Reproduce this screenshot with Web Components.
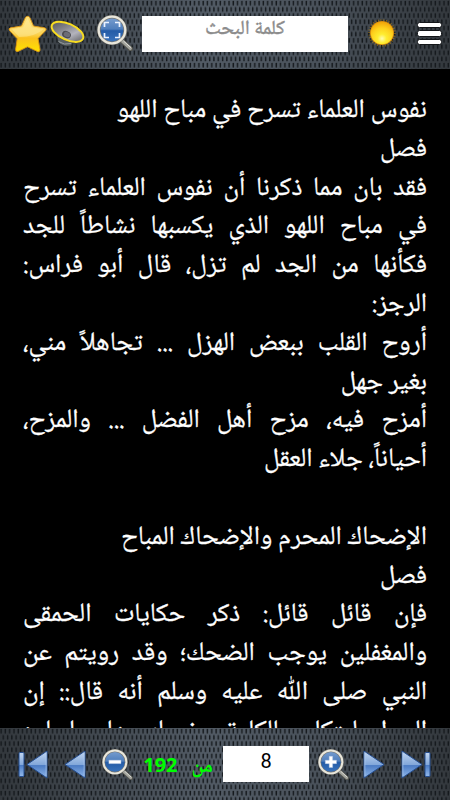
<!DOCTYPE html>
<html lang="ar" dir="rtl">
<head>
<meta charset="utf-8">
<title>Reader</title>
<style>
html,body{margin:0;height:100%;background:#000;overflow:hidden}
</style>
</head>
<body>
<reader-app></reader-app>
<script>
const define = (name, html) => customElements.define(name, class extends HTMLElement {
  constructor() {
    super();
    const t = document.createElement('template');
    t.innerHTML = html;
    this.attachShadow({mode: 'open'}).append(t.content.cloneNode(true));
  }
});

define('mesh-bar', `<style>
:host{display:block;position:relative;box-sizing:border-box;direction:ltr;background:#3b4248;overflow:hidden}
.tex{position:absolute;inset:0;width:100%;height:100%}
.row{position:relative;display:flex;align-items:flex-start;height:100%}
</style>
<svg class="tex"><defs>
<pattern id="m" width="4.3" height="12.4" patternUnits="userSpaceOnUse">
<rect x=".4" y=".8" width="1.4" height="4.8" rx=".7" fill="#14181c"/>
<rect x="2.55" y="7" width="1.4" height="4.8" rx=".7" fill="#14181c"/>
</pattern>
<linearGradient id="g"><stop offset="0" stop-color="#33383d"/><stop offset=".45" stop-color="#525b65"/><stop offset=".7" stop-color="#4a525b"/><stop offset="1" stop-color="#33383d"/></linearGradient></defs>
<rect width="100%" height="100%" fill="url(#g)"/><rect width="100%" height="100%" fill="url(#m)"/></svg>
<div class="row"><slot></slot></div>`);

define('star-icon', `<style>:host{display:block;width:40px;height:38px}svg{display:block}</style>
<svg width="40" height="38" viewBox="0 0 40 38"><defs><linearGradient id="a" x2="0" y2="1"><stop offset="0" stop-color="#ffe27a"/><stop offset=".5" stop-color="#fbd355"/><stop offset=".62" stop-color="#fbc11d"/><stop offset="1" stop-color="#ffe200"/></linearGradient></defs>
<path d="M19.5 1.3Q21 .8 22 3L25.5 11 36.5 12.8Q39.3 13.5 37.5 15.7L30 23.5 32 34.5Q32 37.5 29.3 36.4L19.5 31.8 10 36.4Q7.3 37.2 7.6 34.3L9.2 23.7 1.5 15.5Q0 13.5 2.6 12.8L13.5 11 17.2 3Q18 1.2 19.5 1.3Z" fill="url(#a)" stroke="#dc9512" stroke-width=".9"/>
<path d="M19.5 3 23.8 12.2 35.5 14.2Q28 21.5 11 22L4 14.2 15 12.2Z" fill="#fff3b5" opacity=".4"/></svg>`);

define('speaker-icon', `<style>:host{display:block;width:37px;height:29px}svg{display:block}</style>
<svg width="37" height="29" viewBox="0 0 37 29"><defs><linearGradient id="a" x2="1" y2=".4"><stop offset="0" stop-color="#4c4c50"/><stop offset=".45" stop-color="#85858b"/><stop offset=".75" stop-color="#b4b4bd"/><stop offset="1" stop-color="#7c7c82"/></linearGradient></defs>
<path d="M7 14 9 22Q13 27.500 22 26L26 20Z" fill="#596064" stroke="#25292b" stroke-width=".8"/><path d="M9.500 21.500Q15 25.500 22 23.500" fill="none" stroke="#949a9c"/>
<g transform="rotate(24 18.500 11.800)"><ellipse cx="18.500" cy="11.800" rx="17.900" ry="9" fill="#3a3216"/>
<ellipse cx="18.500" cy="11.800" rx="17" ry="8.100" fill="url(#a)" stroke="#f7dc22" stroke-width="2"/></g>
<ellipse cx="17.500" cy="14.600" rx="4.600" ry="3.500" transform="rotate(24 17.500 14.600)" fill="#4c4c52"/><ellipse cx="18.200" cy="14.500" rx="3.300" ry="2.500" transform="rotate(24 18 14)" fill="#6d6d76"/></svg>`);

define('lens-icon', `<style>:host{display:block;width:31px;height:31px}svg{display:block;width:100%;height:100%}
g.k{display:none}:host([kind=plus]) .plus,:host([kind=minus]) .minus,:host([kind=frame]) .frame{display:block}</style>
<svg viewBox="0 0 36 36"><defs><linearGradient id="a" x2="0" y2="1"><stop offset="0" stop-color="#7a9fd0"/><stop offset=".46" stop-color="#507fbd"/><stop offset=".53" stop-color="#245ca7"/><stop offset="1" stop-color="#3c76bf"/></linearGradient></defs>
<path d="M25.5 26.5 33.5 33.8" stroke="#555650" stroke-width="5" stroke-linecap="round"/>
<path d="M25.5 26.3 33.3 33.4" stroke="#a3a49d" stroke-width="3.3" stroke-linecap="round"/><path d="M26.5 26 34 32.7" stroke="#e0e0da" stroke-width="1"/>
<circle cx="15" cy="15" r="13.2" fill="url(#a)" stroke="#77756e" stroke-width="3.5"/>
<circle cx="15" cy="15" r="13.3" fill="none" stroke="#e9e7dc" stroke-width="2.3"/>
<g class="k frame" fill="none" stroke="#eaf2ff" stroke-width="1.7"><path d="M7.5 12V7.5H12M18 7.5h4.5V12M22.5 18v4.5H18M12 22.5H7.5V18"/></g>
<g class="k minus"><path d="M8 13h14v4H8z" fill="#fff" stroke="#b1c5e3" stroke-width=".5"/></g>
<g class="k plus"><path d="M13 8.500h4V13h4.500v4H17v4.500h-4V17H8.500v-4H13z" fill="#fff" stroke="#b1c5e3" stroke-width=".5"/></g></svg>`);

define('sun-icon', `<style>:host{display:block;width:30px;height:30px}svg{display:block}</style>
<svg width="30" height="30" viewBox="-15 -15 30 30"><defs><radialGradient id="a" cy=".75" r=".8"><stop offset="0" stop-color="#fffbb0"/><stop offset=".25" stop-color="#ffed31"/><stop offset=".6" stop-color="#fed01c"/><stop offset="1" stop-color="#ed9904"/></radialGradient></defs>
<circle r="12.500" fill="none" stroke="#b98413" stroke-width="2.600" stroke-dasharray="1 1.6" opacity=".6"/><circle r="12" fill="#d58a0b"/><circle r="11.200" fill="url(#a)"/></svg>`);

define('menu-icon', `<style>:host{display:flex;flex-direction:column;gap:2px;width:25px}i{display:block;box-sizing:border-box;height:6.4px;background:#fff;border:.5px solid #14171a;border-radius:2.5px}</style><i></i><i></i><i></i>`);

define('nav-arrow', `<style>:host{display:block;height:29px}:host([flip]){transform:scaleX(-1)}svg{display:block}:host(:not([end])) .bar{display:none}</style>
<svg width="31" height="29" viewBox="0 0 31 29"><defs><linearGradient id="a" x2="0" y2="1"><stop offset="0" stop-color="#c3d7f1"/><stop offset=".5" stop-color="#83a8da"/><stop offset=".54" stop-color="#4c7cc4"/><stop offset="1" stop-color="#93baec"/></linearGradient></defs>
<path d="M1 1 21 14.500 1 28Z" fill="url(#a)" stroke="#254e91" stroke-width="1"/><path d="M1.800 2.500 V26.300" stroke="#b7d2f3" stroke-width=".7"/>
<rect class="bar" x="24" y="2.500" width="5" height="24" rx="1" fill="url(#a)" stroke="#254e91" stroke-width="1"/></svg>`);

define('text-box', `<style>:host{display:block;box-sizing:border-box;background:#fff;height:36px;text-align:center;color:#000}</style><slot></slot>`);

define('text-line', `<style>:host{display:block;height:38.8px;line-height:38.8px;white-space:nowrap;direction:rtl;text-align:right}:host([fill]){text-align-last:justify}</style><slot></slot>`);

define('book-page', `<style>:host{display:block;flex:1;min-height:0;overflow:hidden;box-sizing:border-box;padding:24px 23px 0;color:#fff;font:26.3px 'Noto Naskh Arabic','Noto Sans',sans-serif;-webkit-text-stroke:.3px #fff}</style><slot></slot>`);

define('reader-app', `<style>
:host{display:flex;flex-direction:column;width:450px;height:800px;background:#000}
.top{height:69px}.bottom{height:72px}
.top star-icon{margin:15px 0 0 8px}.top speaker-icon{margin:20px 0 0 1px}.top lens-icon{width:36px;height:36px;margin:15px 0 0 11px}
.search{width:206px;margin:16px 0 0 9px;padding-top:2px;color:#8c8c8c;font:500 20px/25px 'Noto Naskh Arabic','Noto Sans',sans-serif;direction:rtl;-webkit-text-stroke:.3px #8c8c8c}
.top sun-icon{margin:18px 0 0 19px}.top menu-icon{margin:22px 0 0 20px}
.bottom nav-arrow{margin-top:21.5px}
.bottom lens-icon{margin-top:20.5px}
.count{display:flex;gap:14px;width:69px;margin:23px 0 0 11px;color:#0f0;font:bold 20px/28px 'Noto Sans','Noto Naskh Arabic',sans-serif;direction:rtl;white-space:nowrap}
.num{width:86px;margin:17.5px 0 0 10px;font:20px/31px Roboto,sans-serif}
</style>
<mesh-bar class="top"><star-icon></star-icon><speaker-icon></speaker-icon><lens-icon kind="frame"></lens-icon><text-box class="search">كلمة البحث</text-box><sun-icon></sun-icon><menu-icon></menu-icon></mesh-bar>
<book-page>
<text-line>نفوس العلماء تسرح في مباح اللهو</text-line>
<text-line>فصل</text-line>
<text-line fill>فقد بان مما ذكرنا أن نفوس العلماء تسرح</text-line>
<text-line fill>في مباح اللهو الذي يكسبها نشاطاً للجد</text-line>
<text-line fill>فكأنها من الجد لم تزل، قال أبو فراس:</text-line>
<text-line>الرجز:</text-line>
<text-line fill>أروح القلب ببعض الهزل ... تجاهلاً مني،</text-line>
<text-line>بغير جهل</text-line>
<text-line fill>أمزح فيه، مزح أهل الفضل ... والمزح،</text-line>
<text-line>أحياناً، جلاء العقل</text-line>
<text-line></text-line>
<text-line>الإضحاك المحرم والإضحاك المباح</text-line>
<text-line>فصل</text-line>
<text-line fill>فإن قائل قائل: ذكر حكايات الحمقى</text-line>
<text-line fill>والمغفلين يوجب الضحك؛ وقد رويتم عن</text-line>
<text-line fill>النبي صلى اللّٰه عليه وسلم أنه قال:: إن</text-line>
<text-line fill>الرجل ليتكلم بالكلمة يضحك بها جلساءه</text-line>
</book-page>
<mesh-bar class="bottom"><nav-arrow flip end style="margin-left:17px"></nav-arrow><nav-arrow flip style="margin-left:7px"></nav-arrow><lens-icon kind="minus" style="margin-left:16px"></lens-icon><span class="count"><span>من</span><span>192</span></span><text-box class="num">8</text-box><lens-icon kind="plus" style="margin-left:9px"></lens-icon><nav-arrow style="margin-left:14px"></nav-arrow><nav-arrow end style="margin-left:7px"></nav-arrow></mesh-bar>`);
</script>
</body>
</html>
